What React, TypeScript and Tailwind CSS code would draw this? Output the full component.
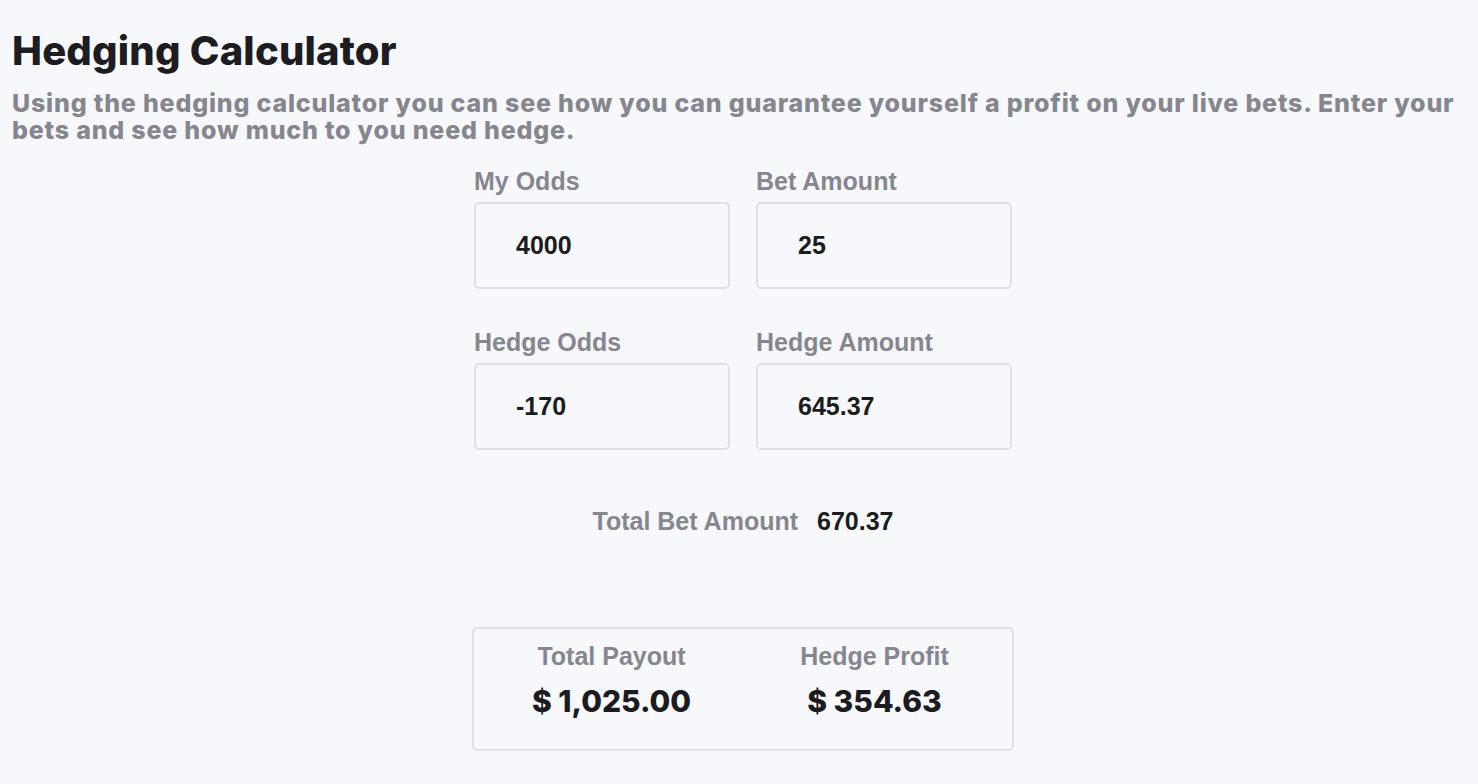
import React from "react";

const LABEL = "text-[25px] font-bold text-[#86868e] leading-none";
const VALUE = "text-[25px] font-bold text-[#1b1b20] leading-none";
const POP = { fontFamily: "Inter, 'Noto Sans', sans-serif" };

function Field({ label, value }: { label: string; value: string }) {
  return (
    <div className="flex flex-col">
      <label className={`${LABEL} mb-[8px]`}>{label}</label>
      <div className="h-[87px] w-[256px] rounded-[5px] border-2 border-[#dfe0e5] flex items-center pl-[40px]">
        <span className={VALUE}>{value}</span>
      </div>
    </div>
  );
}

function Stat({ label, value }: { label: string; value: string }) {
  return (
    <div className="flex flex-col items-center">
      <span className={LABEL}>{label}</span>
      <span
        className="mt-[17px] text-[30px] font-extrabold text-[#1b1b20] leading-none"
        style={POP}
      >
        {value}
      </span>
    </div>
  );
}

export default function App() {
  return (
    <div
      className="min-h-screen bg-[#f7f8fc] px-[12px] pt-[31px]"
      style={{ fontFamily: "'Liberation Sans', Arial, sans-serif" }}
    >
      <h1
        className="text-[40px] font-extrabold text-[#1c1c21] leading-none tracking-[0.2px]"
        style={POP}
      >
        Hedging Calculator
      </h1>
      <p
        className="mt-[19px] text-[25px] font-extrabold text-[#86868e] leading-[27px] tracking-[0.8px]"
        style={POP}
      >
        Using the hedging calculator you can see how you can guarantee yourself a profit on your live bets. Enter your
        bets and see how much to you need hedge.
      </p>

      <div className="mx-auto w-[538px] pt-[25px] translate-x-[4px]">
        <div className="grid grid-cols-2 gap-x-[26px] gap-y-[41px]">
          <Field label="My Odds" value="4000" />
          <Field label="Bet Amount" value="25" />
          <Field label="Hedge Odds" value="-170" />
          <Field label="Hedge Amount" value="645.37" />
        </div>

        <div className="mt-[59px] flex items-center justify-center gap-[19px]">
          <span className={LABEL}>Total Bet Amount</span>
          <span className={VALUE}>670.37</span>
        </div>

        <div className="mt-[93px] -mx-[2px] h-[124px] rounded-[5px] border-2 border-[#dfe0e5] grid grid-cols-2 items-start pt-[15px] px-[6px]">
          <Stat label="Total Payout" value="$ 1,025.00" />
          <Stat label="Hedge Profit" value="$ 354.63" />
        </div>
      </div>
    </div>
  );
}
